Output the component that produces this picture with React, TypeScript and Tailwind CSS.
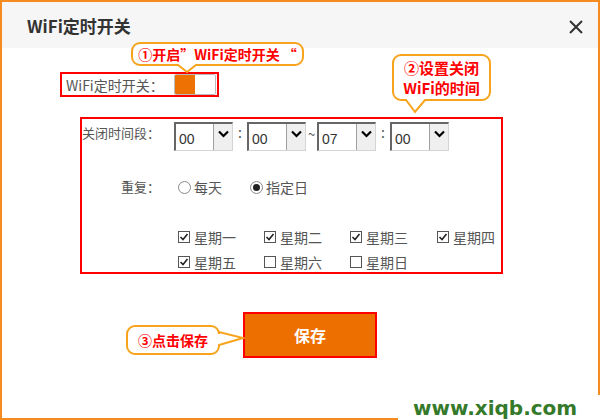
import React from "react";

const CJK = { fontFamily: "'Noto Sans CJK SC', 'Noto Sans', sans-serif" };

function Select({ value }: { value: string }) {
  return (
    <div className="flex h-[29px] w-[59px] shrink-0 border-l-2 border-t-2 border-r border-b border-l-[#666] border-t-[#666] border-r-[#d4d4d4] border-b-[#d4d4d4] bg-white">
      <div
        className="flex flex-1 items-end pb-[3px] pl-[3px] text-[14px] leading-[16px] text-[#333]"
        style={{ fontFamily: "'Liberation Sans', Arial, sans-serif" }}
      >
        {value}
      </div>
      <div className="flex w-[19px] items-start justify-center border-l border-[#a0a0a0] bg-[#efefef] pt-[6px]">
        <svg width="11" height="8" viewBox="0 0 11 8">
          <path d="M1 1.5 L5.5 6 L10 1.5" fill="none" stroke="#000" strokeWidth="2.2" />
        </svg>
      </div>
    </div>
  );
}

function Check({ checked, label }: { checked: boolean; label: string }) {
  return (
    <div className="flex items-center gap-[4px] whitespace-nowrap">
      <div className="flex h-[12px] w-[12px] shrink-0 items-center justify-center border border-[#555] bg-white">
        {checked && (
          <svg width="10" height="10" viewBox="0 0 10 10">
            <path d="M1.5 5 L4 7.5 L8.5 2" fill="none" stroke="#222" strokeWidth="1.6" />
          </svg>
        )}
      </div>
      <span className="text-[14px] leading-[20px] text-[#555]">{label}</span>
    </div>
  );
}

function Radio({ checked, label }: { checked: boolean; label: string }) {
  return (
    <div className="flex items-center gap-[3px] whitespace-nowrap">
      <div className="flex h-[13px] w-[13px] shrink-0 items-center justify-center rounded-full border border-[#888] bg-white">
        {checked && <div className="h-[7px] w-[7px] rounded-full bg-[#222]" />}
      </div>
      <span className="text-[14px] leading-[20px] text-[#555]">{label}</span>
    </div>
  );
}

const CALLOUT_STROKE = "#f7a31c";

export default function App() {
  return (
    <div className="relative h-[420px] w-[600px] overflow-hidden bg-white" style={CJK}>
      <div className="h-[420px] w-[600px] border-2 border-[#f68b1f] bg-white">
        {/* header */}
        <div className="flex h-[46px] items-center justify-between bg-[#f6f6f6] pl-[25px] pr-[15px]">
          <div className="mt-[2px] whitespace-nowrap text-[17px] font-bold leading-[24px] text-[#333]">WiFi定时开关</div>
          <svg width="14" height="14" viewBox="0 0 14 14" className="mt-[4px]">
            <path d="M1 1 L13 13 M13 1 L1 13" stroke="#333" strokeWidth="2" />
          </svg>
        </div>

        {/* switch row */}
        <div className="ml-[58px] mt-[24px] flex h-[25px] w-[159px] items-center border-2 border-[#ff0000] pl-[4px]">
          <span className="shrink-0 whitespace-nowrap text-[14px] leading-[20px] text-[#555]">WiFi定时开关：</span>
          <div className="ml-auto mr-[1px] flex h-[21px] w-[42px] shrink-0 overflow-hidden rounded-[2px] border border-[#bbb]">
            <div className="w-[20px] bg-[#ee7203]" />
            <div className="flex-1 bg-white" />
          </div>
        </div>

        {/* time settings */}
        <div className="ml-[78px] mt-[20px] h-[157px] w-[423px] border-2 border-[#ff0000] pt-[3px]">
          <div className="flex items-start">
            <div className="w-[78px] shrink-0 whitespace-nowrap pt-[1px] text-right text-[13px] leading-[20px] text-[#555]">关闭时间段：</div>
            <div className="ml-[14px] flex items-start">
              <Select value="00" />
              <div className="w-[14px] text-center text-[14px] leading-[20px] text-[#555]">:</div>
              <Select value="00" />
              <div className="w-[11px] pt-[2px] text-center text-[13px] leading-[20px] text-[#555]">~</div>
              <Select value="07" />
              <div className="w-[14px] text-center text-[14px] leading-[20px] text-[#555]">:</div>
              <Select value="00" />
            </div>
          </div>

          <div className="mt-[26px] flex items-center">
            <div className="w-[78px] shrink-0 whitespace-nowrap text-right text-[13px] leading-[20px] text-[#555]">重复：</div>
            <div className="ml-[18px] flex items-center gap-[28px]">
              <Radio checked={false} label="每天" />
              <Radio checked={true} label="指定日" />
            </div>
          </div>

          <div className="ml-[96px] mt-[30px] grid w-[320px] grid-cols-[86px_86px_87px_61px] gap-y-[5px]">
            <Check checked label="星期一" />
            <Check checked label="星期二" />
            <Check checked label="星期三" />
            <Check checked label="星期四" />
            <Check checked label="星期五" />
            <Check checked={false} label="星期六" />
            <Check checked={false} label="星期日" />
          </div>
        </div>

        {/* save button */}
        <div className="ml-[241px] mt-[38px] flex h-[46px] w-[134px] items-center justify-center border-2 border-[#ff0000] bg-[#ec6f00]">
          <span className="text-[16px] font-bold leading-[22px] text-white">保存</span>
        </div>
      </div>

      {/* callout 1 */}
      <svg className="absolute left-[130px] top-[41px]" width="176" height="34" viewBox="0 0 176 34">
        <path
          d="M10 2 H165 A8 8 0 0 1 173 10 V16 A8 8 0 0 1 165 24 H66 L57 31 L48 24 H10 A8 8 0 0 1 2 16 V10 A8 8 0 0 1 10 2 Z"
          fill="#fff"
          stroke={CALLOUT_STROKE}
          strokeWidth="2"
        />
      </svg>
      <div className="absolute left-[132px] top-[43px] flex h-[22px] w-[171px] items-center justify-center whitespace-nowrap text-[14px] font-bold leading-[18px] text-[#ff0000]">
        ①开启”WiFi定时开关 “
      </div>

      {/* callout 2 */}
      <svg className="absolute left-[391px] top-[53px]" width="101" height="62" viewBox="0 0 101 62">
        <path
          d="M10 2 H91 A8 8 0 0 1 99 10 V39 A8 8 0 0 1 91 47 H34 L24 59 L15 47 H10 A8 8 0 0 1 2 39 V10 A8 8 0 0 1 10 2 Z"
          fill="#fff"
          stroke={CALLOUT_STROKE}
          strokeWidth="2"
        />
      </svg>
      <div className="absolute left-[393px] top-[57px] flex h-[42px] w-[97px] flex-col items-center justify-center whitespace-nowrap text-[15px] font-bold leading-[20px] text-[#ff0000]">
        <div>②设置关闭</div>
        <div>WiFi的时间</div>
      </div>

      {/* callout 3 */}
      <svg className="absolute left-[125px] top-[324px]" width="120" height="32" viewBox="0 0 120 32">
        <path
          d="M10 2 H86 A8 8 0 0 1 94 10 V8 L118 14 L94 21 V22 A8 8 0 0 1 86 30 H10 A8 8 0 0 1 2 22 V10 A8 8 0 0 1 10 2 Z"
          fill="#fff"
          stroke={CALLOUT_STROKE}
          strokeWidth="2"
        />
      </svg>
      <div className="absolute left-[127px] top-[326px] flex h-[28px] w-[92px] items-center justify-center whitespace-nowrap text-[14px] font-bold leading-[18px] text-[#ff0000]">
        ③点击保存
      </div>

      {/* watermark */}
      <div className="absolute bottom-0 right-0 flex h-[25px] w-[202px] items-center bg-white pl-[15px]">
        <span
          className="text-[20px] font-bold leading-[22px] text-[#357a2b]"
          style={{ fontFamily: "'DejaVu Sans', Verdana, sans-serif" }}
        >
          www.xiqb.com
        </span>
      </div>
    </div>
  );
}
